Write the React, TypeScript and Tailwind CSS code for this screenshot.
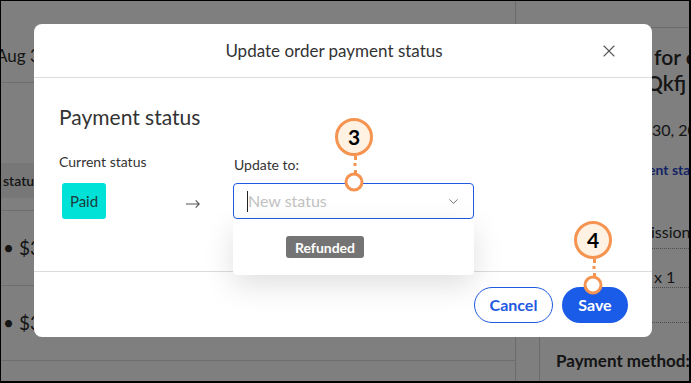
import { ChevronDown, X } from "lucide-react";

const font = "font-['Lato','Noto_Sans',sans-serif]";

function Marker({ n, x, y, dotY }: { n: string; x: number; y: number; dotY: number }) {
  // numbered callout with a dotted leader down to a small ring
  return (
    <>
      <div
        className="absolute flex h-[38px] w-[38px] -translate-x-1/2 -translate-y-1/2 items-center justify-center rounded-full border-[3px] border-[#f59350] bg-[#fff2e2] text-[21px] font-bold text-black"
        style={{ left: x, top: y }}
      >
        {n}
      </div>
      <div
        className="absolute w-[3px] -translate-x-1/2 border-l-[3px] border-dotted border-[#f59350]"
        style={{ left: x + 1, top: y + 19, height: dotY - y - 27 }}
      />
      <div
        className="absolute h-[19px] w-[19px] -translate-x-1/2 -translate-y-1/2 rounded-full border-[3px] border-[#f59350] bg-white"
        style={{ left: x, top: dotY }}
      />
    </>
  );
}

function Page() {
  return (
    <div className="flex h-full">
      <div className="flex w-[515px] shrink-0 flex-col border-r border-[#d6d6d6] text-[#2b2b2b]">
        <div className="h-[82px] border-b border-[#dcdcdc] pt-[45px]">
          <p className="-ml-[5px] whitespace-nowrap text-[17px] leading-[20px]">Aug 30, 2023</p>
        </div>
        <div className="h-[80px]" />
        <div className="flex h-[35px] items-center whitespace-nowrap bg-[#eeeeee] text-[14px] font-semibold">
          <span className="-ml-[60px] inline-block w-[62px]">Payment</span>status
        </div>
        <div className="h-[13px] border-b border-[#dcdcdc]" />
        <div className="flex h-[75px] items-center border-b border-[#dcdcdc] pl-[2px] text-[19px]">• $35.00</div>
        <div className="flex h-[75px] items-center border-b border-[#dcdcdc] pl-[2px] text-[19px]">• $35.00</div>
      </div>
      <div className="flex min-w-0 flex-1 flex-col">
        <div className="h-[27px] border-b border-[#d6d6d6]" />
        <div className="flex flex-1">
          <div className="w-[24px] shrink-0 border-r border-[#d6d6d6]" />
          <div className="flex min-w-0 flex-1 flex-col overflow-hidden pl-[16px] text-[#2b2b2b]">
            <p className="mt-[16px] whitespace-nowrap text-[21px] font-semibold leading-[26px]">
              <span className="inline-block w-[98px]">Refunds</span>for order
            </p>
            <p className="whitespace-nowrap text-[21px] font-semibold leading-[26px]">
              <span className="inline-block w-[90px]">#8xTz</span>Qkfj
            </p>
            <p className="mt-[24px] whitespace-nowrap text-[16px] leading-[20px]">
              <span className="inline-block w-[96px]">Placed Aug</span>30, 2023
            </p>
            <p className="mt-[21px] whitespace-nowrap text-[14px] font-bold leading-[18px] text-[#2a47c9]">
              <span className="inline-block w-[92px]">Update paym</span>ent status
            </p>
            <div className="mt-[43px] border-b border-dotted border-[#9a9a9a] pb-[6px]">
              <p className="whitespace-nowrap text-[16px] leading-[20px]">
                <span className="inline-block w-[95px]">Comm</span>ission
              </p>
            </div>
            <div className="h-[39px] border-b border-dotted border-[#9a9a9a] pt-[18px]">
              <p className="whitespace-nowrap text-[16px] leading-[20px]">
                <span className="inline-block w-[98px]">Item</span>x 1
              </p>
            </div>
            <div className="h-[35px] border-b border-dotted border-[#9a9a9a]" />
            <p className="mt-[28px] whitespace-nowrap text-[17px] font-bold leading-[20px]">Payment method:</p>
          </div>
        </div>
      </div>
    </div>
  );
}

function Modal() {
  return (
    <div className="absolute left-[33px] top-[23px] flex h-[313px] w-[618px] flex-col rounded-[8px] bg-white text-[#333]">
      <div className="relative flex h-[54px] shrink-0 items-center justify-center border-b border-[#dcdcdc] pr-[18px]">
        <p className="text-[17px] leading-[20px]">Update order payment status</p>
        <X className="absolute right-[33px] top-[17px] h-[20px] w-[20px] text-[#555]" strokeWidth={1.3} />
      </div>
      <div className="flex h-[194px] shrink-0 flex-col border-b border-[#dcdcdc] px-[25px]">
        <p className="mt-[27px] text-[21px] leading-[24px]">Payment status</p>
        <div className="mt-[24px] flex">
          <div className="w-[124px] shrink-0">
            <p className="text-[14px] leading-[18px]">Current status</p>
            <div className="ml-[3px] mt-[12px] flex h-[36px] w-[44px] items-center justify-center rounded-[3px] bg-[#00e1d8] text-[15px] text-[#1d3b3b]">
              Paid
            </div>
          </div>
          <div className="flex w-[18px] shrink-0 items-end pb-[10px] pl-[2px]">
            <svg width="18" height="10" viewBox="0 0 18 10" fill="none" stroke="#555" strokeWidth="1.2">
              <path d="M1 5h15M12 1l4 4-4 4" />
            </svg>
          </div>
          <div className="relative ml-[32px] w-[241px] shrink-0 pt-[3px]">
            <p className="pl-[1px] text-[14px] leading-[18px]">Update to:</p>
            <div className="relative mt-[9px] flex h-[36px] items-center rounded-[4px] border border-[#1f5ae0] pl-[13px] pr-[12px]">
              <span className="h-[21px] w-px bg-[#222]" />
              <span className="flex-1 text-[16px] text-[#c2c2c2]">New status</span>
              <ChevronDown className="h-[15px] w-[15px] text-[#666]" strokeWidth={1.5} />
              <div className="absolute left-[-1px] top-[35px] z-10 h-[56px] w-[241px] rounded-b-[4px] bg-white pl-[53px] pt-[17px] shadow-[0_10px_30px_rgba(0,0,0,0.13)]">
                <span className="flex h-[22px] w-[78px] items-center justify-center rounded-[3px] bg-[#747474] text-[14px] font-bold text-white">
                  Refunded
                </span>
              </div>
            </div>
          </div>
        </div>
      </div>
      <div className="flex flex-1 items-start justify-end gap-[9px] pr-[24px] pt-[15px]">
        <button className="h-[36px] w-[79px] rounded-full border border-[#1f5ae0] bg-white text-[16px] font-bold text-[#1f5ae0]">
          Cancel
        </button>
        <button className="h-[36px] w-[66px] rounded-full bg-[#1a5be8] text-[16px] font-bold text-white">Save</button>
      </div>
    </div>
  );
}

export default function App() {
  return (
    <div className={`relative h-[383px] w-[691px] overflow-hidden border-l border-t border-b-2 border-r-2 border-black bg-white ${font}`}>
      <Page />
      <div className="absolute inset-0 bg-black/50" />
      <Modal />
      <Marker n="3" x={353} y={136} dotY={181} />
      <Marker n="4" x={592} y={239} dotY={284} />
    </div>
  );
}
